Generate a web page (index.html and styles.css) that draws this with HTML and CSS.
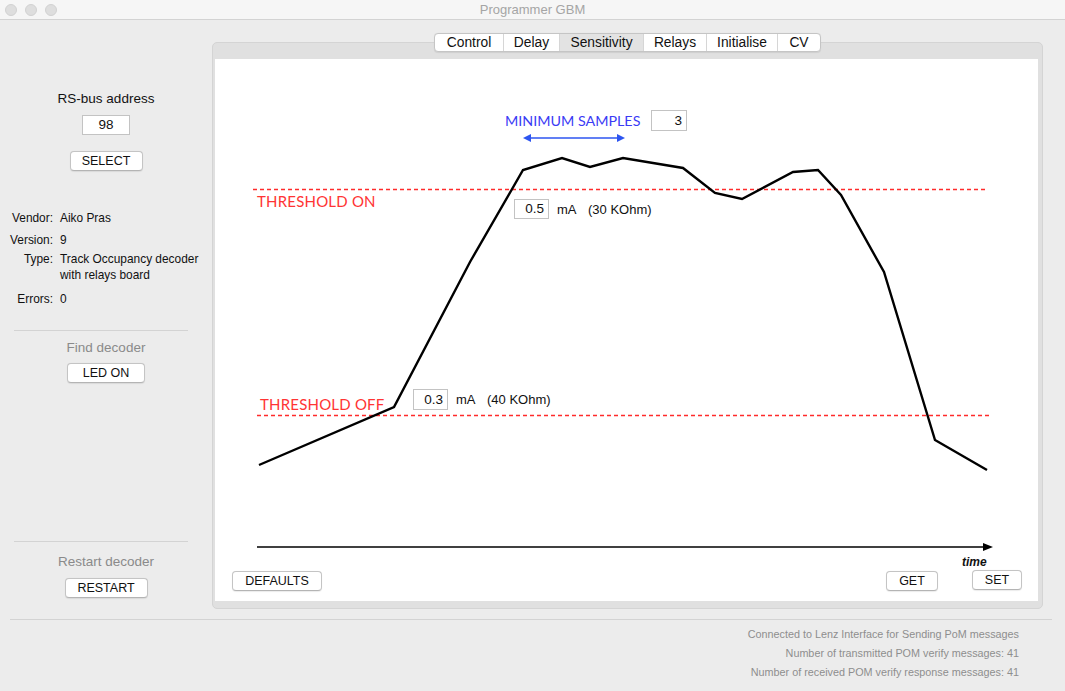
FILE: index.html
```html
<!DOCTYPE html>
<html>
<head>
<meta charset="utf-8">
<title>Programmer GBM</title>
<link rel="stylesheet" href="styles.css">
</head>
<body>
<div class="titlebar">
  <div class="lights"><span class="light"></span><span class="light"></span><span class="light"></span></div>
  <div class="title">Programmer GBM</div>
  <div></div>
</div>
<div class="main">
  <aside class="sidebar">
    <div class="rs-label">RS-bus address</div>
    <div class="field addr">98</div>
    <button class="btn select">SELECT</button>
    <div class="info">
      <div class="info-row r-vendor"><span class="k">Vendor:</span><span class="v">Aiko Pras</span></div>
      <div class="info-row r-version"><span class="k">Version:</span><span class="v">9</span></div>
      <div class="info-row r-type"><span class="k">Type:</span><span class="v">Track Occupancy decoder<br>with relays board</span></div>
      <div class="info-row r-errors"><span class="k">Errors:</span><span class="v">0</span></div>
    </div>
    <div class="sep sep1"></div>
    <div class="section-label find">Find decoder</div>
    <button class="btn led">LED ON</button>
    <div class="sep sep2"></div>
    <div class="section-label restart-label">Restart decoder</div>
    <button class="btn restart">RESTART</button>
  </aside>
  <section class="content">
    <div class="tabs">
      <div class="tab t-control">Control</div>
      <div class="tab t-delay">Delay</div>
      <div class="tab t-sens active">Sensitivity</div>
      <div class="tab t-relays">Relays</div>
      <div class="tab t-init">Initialise</div>
      <div class="tab t-cv">CV</div>
    </div>
    <div class="panel">
      <div class="sheet">
        <div class="canvas">
          <svg class="chart" width="823" height="509" viewBox="0 0 823 509">
            <line x1="38" y1="130.5" x2="773" y2="130.5" stroke="#ff2b2b" stroke-width="1.3" stroke-dasharray="4 3"/>
            <line x1="42" y1="356.5" x2="775" y2="356.5" stroke="#ff2b2b" stroke-width="1.3" stroke-dasharray="4 3"/>
            <polyline fill="none" stroke="#000" stroke-width="2.4" stroke-linejoin="miter" points="44,406 179,348 255,203 308,111 347,99 375,108 408,99 468,109 500,134 527,140 578,113 603,111 626,136 669,213 720,381 772,411"/>
            <line x1="42" y1="488" x2="770" y2="488" stroke="#000" stroke-width="1.6"/>
            <polygon points="768,484 778,488 768,492" fill="#000"/>
            <line x1="314" y1="79" x2="404" y2="79" stroke="#2d55f0" stroke-width="1.6"/>
            <polygon points="316,75 308,79 316,83" fill="#2d55f0"/>
            <polygon points="402,75 410,79 402,83" fill="#2d55f0"/>
          </svg>
          <div class="lbl-red th-on">THRESHOLD ON</div>
          <div class="lbl-red th-off">THRESHOLD OFF</div>
          <div class="lbl-blue min-samples">MINIMUM SAMPLES</div>
          <div class="field cfield f-samples">3</div>
          <div class="field cfield f-on">0.5</div>
          <div class="unit u-on">mA</div>
          <div class="unit o-on">(30 KOhm)</div>
          <div class="field cfield f-off">0.3</div>
          <div class="unit u-off">mA</div>
          <div class="unit o-off">(40 KOhm)</div>
          <div class="time">time</div>
        </div>
        <div class="sheet-footer">
          <button class="btn defaults">DEFAULTS</button>
          <div class="right-btns">
            <button class="btn get">GET</button>
            <button class="btn set">SET</button>
          </div>
        </div>
      </div>
    </div>
  </section>
</div>
<div class="bottom-sep"></div>
<div class="status">
  <div>Connected to Lenz Interface for Sending PoM messages</div>
  <div>Number of transmitted POM verify messages: 41</div>
  <div>Number of received POM verify response messages: 41</div>
</div>
</body>
</html>
```

FILE: styles.css
```css
* { box-sizing: border-box; }
html, body { margin: 0; padding: 0; }
body {
  width: 1065px;
  height: 691px;
  overflow: hidden;
  background: #ececec;
  font-family: "Liberation Sans", Arial, sans-serif;
  color: #111;
}

/* title bar */
.titlebar {
  height: 20px;
  background: #f6f6f6;
  border-bottom: 1px solid #d3d3d3;
  display: grid;
  grid-template-columns: 1fr auto 1fr;
  align-items: center;
}
.lights { display: flex; gap: 8px; padding-left: 5px; }
.light {
  width: 12px; height: 12px; border-radius: 50%;
  background: #dedede; border: 1px solid #d2d2d2;
}
.title { font-size: 13px; color: #a5a5a5; line-height: 19px; }

/* main */
.main { display: flex; height: 589px; }
.sidebar {
  width: 212px;
  display: flex;
  flex-direction: column;
  align-items: center;
  font-size: 13.5px;
}
.rs-label { margin-top: 71px; line-height: 16px; }
.field {
  background: #fff;
  border: 1px solid #c3c3c3;
  font-size: 13px;
  line-height: 18px;
}
.addr { margin-top: 8px; width: 48px; height: 20px; text-align: center; font-size: 13.5px; }
.btn {
  font-family: "Liberation Sans", Arial, sans-serif;
  font-size: 12.5px;
  color: #111;
  background: #fff;
  border: 1px solid #c4c4c4;
  border-bottom-color: #b4b4b4;
  border-radius: 4px;
  height: 20px;
  padding: 0;
  line-height: 18px;
  box-shadow: 0 0.5px 1px rgba(0,0,0,0.08);
}
.select { margin-top: 16px; width: 73px; }
.info { align-self: stretch; margin-top: 39px; font-size: 11.9px; }
.info-row { display: flex; line-height: 16px; }
.info-row .k { width: 53px; text-align: right; flex: none; }
.info-row .v { margin-left: 7px; white-space: nowrap; }
.r-version { margin-top: 6px; }
.r-type { margin-top: 3px; }
.r-errors { margin-top: 8px; }
.sep { align-self: flex-start; margin-left: 14px; width: 174px; height: 1px; background: #d3d3d3; }
.sep1 { margin-top: 23px; }
.sep2 { margin-top: 158px; }
.section-label { color: #8a8a8a; line-height: 16px; }
.find { margin-top: 9px; }
.led { margin-top: 7px; width: 78px; }
.restart-label { margin-top: 12px; }
.restart { margin-top: 8px; width: 83px; }

/* content */
.content {
  width: 831px;
  padding-top: 13px;
  display: flex;
  flex-direction: column;
  align-items: center;
}
.tabs {
  position: relative;
  z-index: 2;
  display: flex;
  height: 20px;
  margin-bottom: -10px;
  background: #fff;
  border: 1px solid #c5c5c5;
  border-radius: 4px;
  overflow: hidden;
  font-size: 13.8px;
  box-shadow: 0 0.5px 1px rgba(0,0,0,0.08);
}
.tab {
  text-align: center;
  line-height: 18px;
  border-left: 1px solid #d6d6d6;
}
.tab:first-child { border-left: none; }
.tab.active { background: #e3e3e3; }
.t-control { width: 68px; }
.t-delay { width: 56px; }
.t-sens { width: 84px; }
.t-relays { width: 63px; }
.t-init { width: 71px; }
.t-cv { width: 43px; }

.panel {
  width: 831px;
  height: 567px;
  background: #e0e0e0;
  border: 1px solid #d4d4d4;
  border-radius: 5px;
  padding: 16px 4px 7px 2px;
}
.sheet {
  height: 542px;
  background: #fff;
  display: flex;
  flex-direction: column;
}
.canvas { position: relative; height: 509px; }
.chart { position: absolute; left: 0; top: 0; }

.lbl-red, .lbl-blue {
  position: absolute;
  font-family: Lato, "Liberation Sans", sans-serif;
  font-size: 15px;
  line-height: 18px;
  letter-spacing: 0.2px;
}
.lbl-red { color: #ff3434; }
.lbl-blue { color: #3b3bf5; font-size: 14.3px; letter-spacing: 0; }
.th-on { left: 42px; top: 133px; }
.th-off { left: 45px; top: 336px; }
.min-samples { left: 290px; top: 53px; }

.cfield {
  position: absolute;
  text-align: right;
  padding-right: 4px;
  height: 21px;
  line-height: 19px;
  font-size: 13.5px;
}
.f-samples { left: 436px; top: 51px; width: 36px; }
.f-on { left: 299px; top: 140px; width: 35px; height: 20px; line-height: 18px; }
.f-off { left: 198px; top: 330px; width: 35px; }
.unit { position: absolute; font-size: 13px; line-height: 16px; }
.u-on { left: 342px; top: 143px; }
.o-on { left: 373px; top: 143px; }
.u-off { left: 241px; top: 333px; }
.o-off { left: 272px; top: 333px; }
.time {
  position: absolute;
  left: 747px; top: 495px;
  font-size: 12px; font-weight: bold; font-style: italic;
  line-height: 16px;
}

.sheet-footer {
  display: flex;
  justify-content: space-between;
  align-items: flex-start;
  padding: 3px 16px 0 17px;
}
.defaults { width: 90px; }
.right-btns { display: flex; gap: 34px; align-items: flex-start; }
.get { width: 52px; }
.set { width: 50px; margin-top: -1px; }

/* bottom */
.bottom-sep {
  margin: 10px 13px 0 10px;
  height: 1px;
  background: #d3d3d3;
}
.status {
  padding: 5px 46px 0 0;
  text-align: right;
  font-size: 10.8px;
  color: #8e8e8e;
  line-height: 19px;
}
```
